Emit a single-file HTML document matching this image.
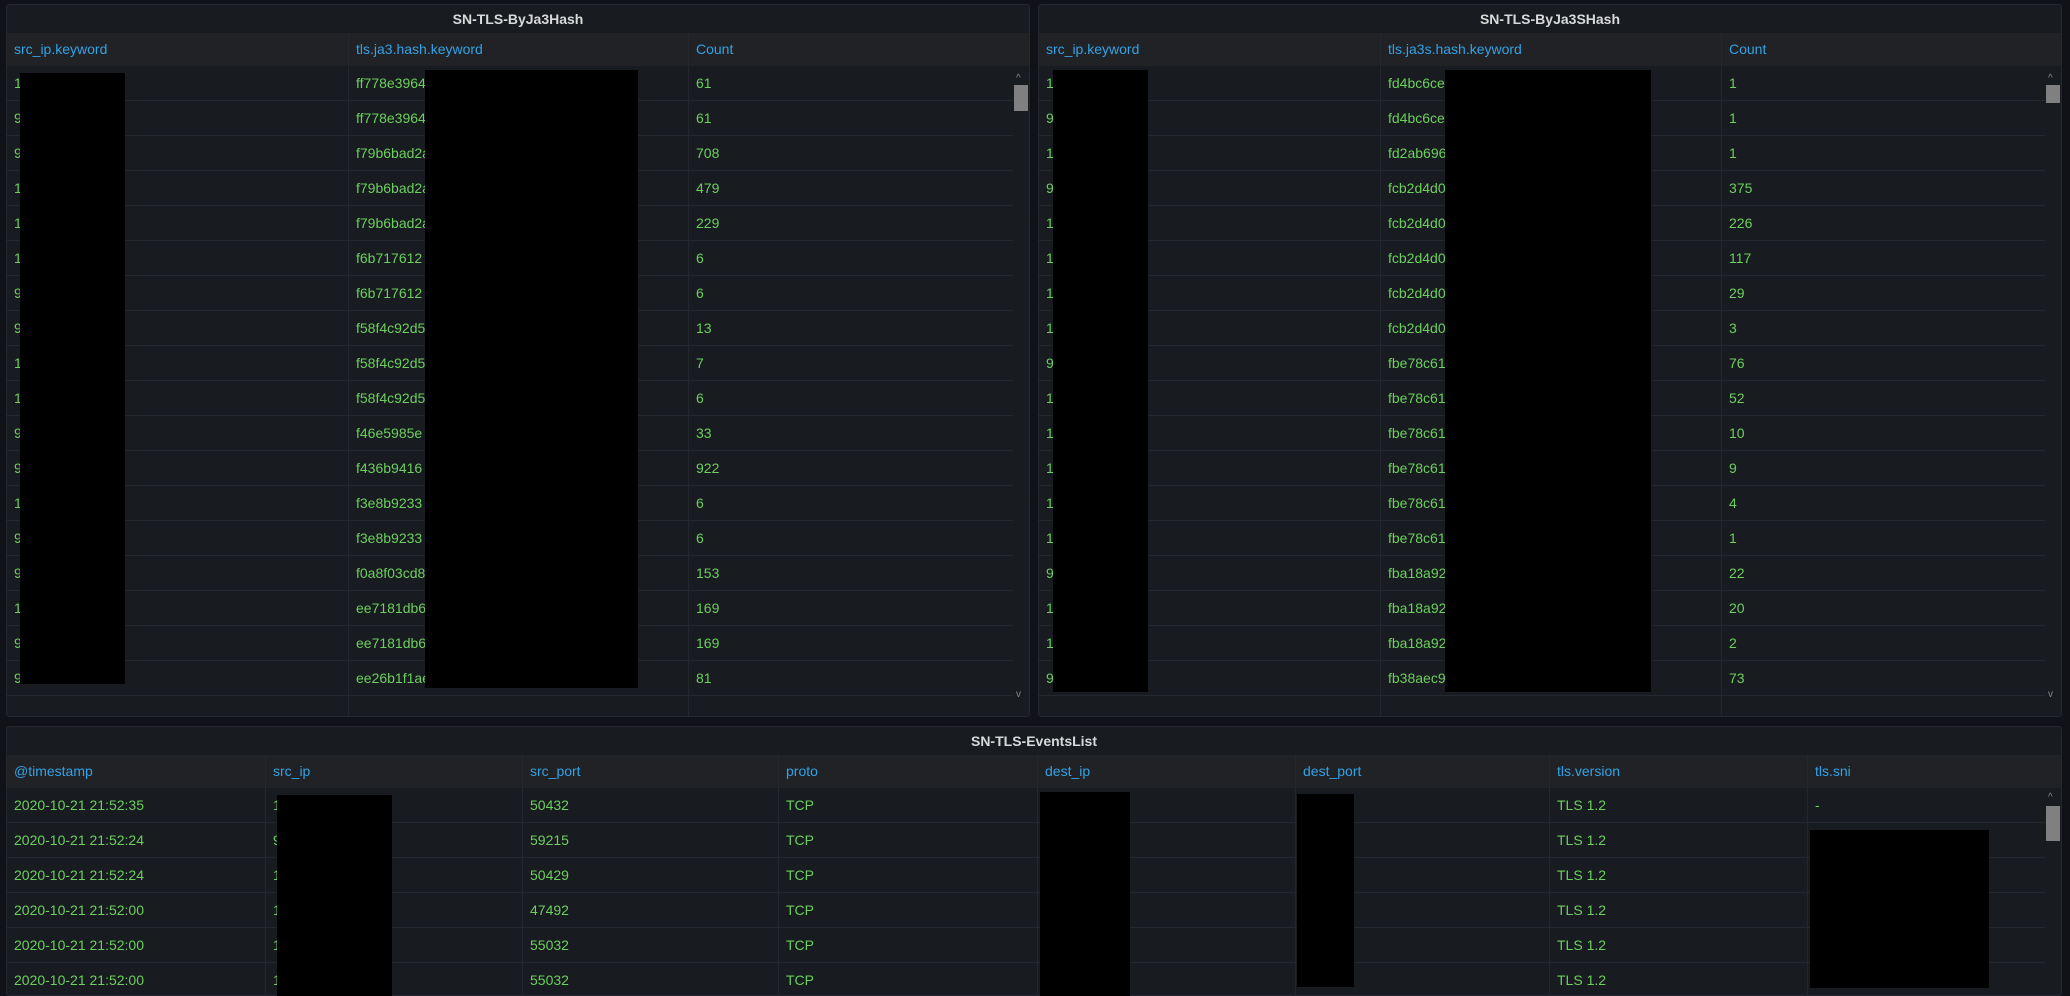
<!DOCTYPE html>
<html><head><meta charset="utf-8"><style>
*{box-sizing:border-box;margin:0;padding:0}
html,body{width:2070px;height:996px;overflow:hidden}
body{background:#111217;font-family:"Liberation Sans",sans-serif;font-size:14px;position:relative}
.p{position:absolute;background:#181b1f;border:1px solid #24272d;border-radius:3px;overflow:hidden}
.t{height:28px;line-height:29px;text-align:center;color:#d8d9da;font-weight:bold;font-size:14px}
.h,.r{display:flex;height:35px;line-height:35px}
.h{height:33px;line-height:33px;background:#202226;color:#33a2e5}
.r{color:#6ccf5e;border-bottom:1px solid #24272d}
.c{padding-left:7px;border-left:1px solid #24272d;white-space:nowrap;overflow:hidden}
.c:first-child{border-left:none}
.b{position:absolute;background:#000}
.sb{position:absolute;width:14px;background:#808080}
.ar{position:absolute;color:#888;font-size:10px}
</style></head><body>

<div class="p" style="left:6px;top:4px;width:1024px;height:713px">
<div class="t">SN-TLS-ByJa3Hash</div>
<div class="h"><div class="c" style="width:341px">src_ip.keyword</div><div class="c" style="width:340px">tls.ja3.hash.keyword</div><div class="c" style="flex:1">Count</div></div>
<div style="width:1006px">
<div class="r"><div class="c" style="width:341px">1</div><div class="c" style="width:340px">ff778e3964</div><div class="c" style="flex:1">61</div></div>
<div class="r"><div class="c" style="width:341px">9</div><div class="c" style="width:340px">ff778e3964</div><div class="c" style="flex:1">61</div></div>
<div class="r"><div class="c" style="width:341px">9</div><div class="c" style="width:340px">f79b6bad2a</div><div class="c" style="flex:1">708</div></div>
<div class="r"><div class="c" style="width:341px">1</div><div class="c" style="width:340px">f79b6bad2a</div><div class="c" style="flex:1">479</div></div>
<div class="r"><div class="c" style="width:341px">1</div><div class="c" style="width:340px">f79b6bad2a</div><div class="c" style="flex:1">229</div></div>
<div class="r"><div class="c" style="width:341px">1</div><div class="c" style="width:340px">f6b717612</div><div class="c" style="flex:1">6</div></div>
<div class="r"><div class="c" style="width:341px">9</div><div class="c" style="width:340px">f6b717612</div><div class="c" style="flex:1">6</div></div>
<div class="r"><div class="c" style="width:341px">9</div><div class="c" style="width:340px">f58f4c92d5</div><div class="c" style="flex:1">13</div></div>
<div class="r"><div class="c" style="width:341px">1</div><div class="c" style="width:340px">f58f4c92d5</div><div class="c" style="flex:1">7</div></div>
<div class="r"><div class="c" style="width:341px">1</div><div class="c" style="width:340px">f58f4c92d5</div><div class="c" style="flex:1">6</div></div>
<div class="r"><div class="c" style="width:341px">9</div><div class="c" style="width:340px">f46e5985e</div><div class="c" style="flex:1">33</div></div>
<div class="r"><div class="c" style="width:341px">9</div><div class="c" style="width:340px">f436b9416</div><div class="c" style="flex:1">922</div></div>
<div class="r"><div class="c" style="width:341px">1</div><div class="c" style="width:340px">f3e8b9233</div><div class="c" style="flex:1">6</div></div>
<div class="r"><div class="c" style="width:341px">9</div><div class="c" style="width:340px">f3e8b9233</div><div class="c" style="flex:1">6</div></div>
<div class="r"><div class="c" style="width:341px">9</div><div class="c" style="width:340px">f0a8f03cd8</div><div class="c" style="flex:1">153</div></div>
<div class="r"><div class="c" style="width:341px">1</div><div class="c" style="width:340px">ee7181db6</div><div class="c" style="flex:1">169</div></div>
<div class="r"><div class="c" style="width:341px">9</div><div class="c" style="width:340px">ee7181db6</div><div class="c" style="flex:1">169</div></div>
<div class="r"><div class="c" style="width:341px">9</div><div class="c" style="width:340px">ee26b1f1ae</div><div class="c" style="flex:1">81</div></div>
<div class="r" style="border:none"><div class="c" style="width:341px"></div><div class="c" style="width:340px"></div><div class="c" style="flex:1"></div></div>
</div>
<div class="ar" style="left:1009px;top:68px">^</div>
<div class="sb" style="left:1007px;top:80px;height:26px"></div>
<div class="ar" style="left:1009px;top:684px">v</div>
</div>

<div class="p" style="left:1038px;top:4px;width:1024px;height:713px">
<div class="t">SN-TLS-ByJa3SHash</div>
<div class="h"><div class="c" style="width:341px">src_ip.keyword</div><div class="c" style="width:341px">tls.ja3s.hash.keyword</div><div class="c" style="flex:1">Count</div></div>
<div style="width:1006px">
<div class="r"><div class="c" style="width:341px">1</div><div class="c" style="width:341px">fd4bc6ce</div><div class="c" style="flex:1">1</div></div>
<div class="r"><div class="c" style="width:341px">9</div><div class="c" style="width:341px">fd4bc6ce</div><div class="c" style="flex:1">1</div></div>
<div class="r"><div class="c" style="width:341px">1</div><div class="c" style="width:341px">fd2ab696</div><div class="c" style="flex:1">1</div></div>
<div class="r"><div class="c" style="width:341px">9</div><div class="c" style="width:341px">fcb2d4d0</div><div class="c" style="flex:1">375</div></div>
<div class="r"><div class="c" style="width:341px">1</div><div class="c" style="width:341px">fcb2d4d0</div><div class="c" style="flex:1">226</div></div>
<div class="r"><div class="c" style="width:341px">1</div><div class="c" style="width:341px">fcb2d4d0</div><div class="c" style="flex:1">117</div></div>
<div class="r"><div class="c" style="width:341px">1</div><div class="c" style="width:341px">fcb2d4d0</div><div class="c" style="flex:1">29</div></div>
<div class="r"><div class="c" style="width:341px">1</div><div class="c" style="width:341px">fcb2d4d0</div><div class="c" style="flex:1">3</div></div>
<div class="r"><div class="c" style="width:341px">9</div><div class="c" style="width:341px">fbe78c61</div><div class="c" style="flex:1">76</div></div>
<div class="r"><div class="c" style="width:341px">1</div><div class="c" style="width:341px">fbe78c61</div><div class="c" style="flex:1">52</div></div>
<div class="r"><div class="c" style="width:341px">1</div><div class="c" style="width:341px">fbe78c61</div><div class="c" style="flex:1">10</div></div>
<div class="r"><div class="c" style="width:341px">1</div><div class="c" style="width:341px">fbe78c61</div><div class="c" style="flex:1">9</div></div>
<div class="r"><div class="c" style="width:341px">1</div><div class="c" style="width:341px">fbe78c61</div><div class="c" style="flex:1">4</div></div>
<div class="r"><div class="c" style="width:341px">1</div><div class="c" style="width:341px">fbe78c61</div><div class="c" style="flex:1">1</div></div>
<div class="r"><div class="c" style="width:341px">9</div><div class="c" style="width:341px">fba18a92</div><div class="c" style="flex:1">22</div></div>
<div class="r"><div class="c" style="width:341px">1</div><div class="c" style="width:341px">fba18a92</div><div class="c" style="flex:1">20</div></div>
<div class="r"><div class="c" style="width:341px">1</div><div class="c" style="width:341px">fba18a92</div><div class="c" style="flex:1">2</div></div>
<div class="r"><div class="c" style="width:341px">9</div><div class="c" style="width:341px">fb38aec9</div><div class="c" style="flex:1">73</div></div>
<div class="r" style="border:none"><div class="c" style="width:341px"></div><div class="c" style="width:341px"></div><div class="c" style="flex:1"></div></div>
</div>
<div class="ar" style="left:1009px;top:68px">^</div>
<div class="sb" style="left:1007px;top:80px;height:18px"></div>
<div class="ar" style="left:1009px;top:684px">v</div>
</div>

<div class="p" style="left:6px;top:726px;width:2056px;height:270px">
<div class="t">SN-TLS-EventsList</div>
<div class="h"><div class="c" style="width:258px">@timestamp</div><div class="c" style="width:257px">src_ip</div><div class="c" style="width:256px">src_port</div><div class="c" style="width:259px">proto</div><div class="c" style="width:258px">dest_ip</div><div class="c" style="width:254px">dest_port</div><div class="c" style="width:258px">tls.version</div><div class="c" style="flex:1">tls.sni</div></div>
<div style="width:2038px">
<div class="r"><div class="c" style="width:258px">2020-10-21 21:52:35</div><div class="c" style="width:257px">1</div><div class="c" style="width:256px">50432</div><div class="c" style="width:259px">TCP</div><div class="c" style="width:258px"></div><div class="c" style="width:254px"></div><div class="c" style="width:258px">TLS 1.2</div><div class="c" style="flex:1">-</div></div>
<div class="r"><div class="c" style="width:258px">2020-10-21 21:52:24</div><div class="c" style="width:257px">9</div><div class="c" style="width:256px">59215</div><div class="c" style="width:259px">TCP</div><div class="c" style="width:258px"></div><div class="c" style="width:254px"></div><div class="c" style="width:258px">TLS 1.2</div><div class="c" style="flex:1"></div></div>
<div class="r"><div class="c" style="width:258px">2020-10-21 21:52:24</div><div class="c" style="width:257px">1</div><div class="c" style="width:256px">50429</div><div class="c" style="width:259px">TCP</div><div class="c" style="width:258px"></div><div class="c" style="width:254px"></div><div class="c" style="width:258px">TLS 1.2</div><div class="c" style="flex:1"></div></div>
<div class="r"><div class="c" style="width:258px">2020-10-21 21:52:00</div><div class="c" style="width:257px">1</div><div class="c" style="width:256px">47492</div><div class="c" style="width:259px">TCP</div><div class="c" style="width:258px"></div><div class="c" style="width:254px"></div><div class="c" style="width:258px">TLS 1.2</div><div class="c" style="flex:1"></div></div>
<div class="r"><div class="c" style="width:258px">2020-10-21 21:52:00</div><div class="c" style="width:257px">1</div><div class="c" style="width:256px">55032</div><div class="c" style="width:259px">TCP</div><div class="c" style="width:258px"></div><div class="c" style="width:254px"></div><div class="c" style="width:258px">TLS 1.2</div><div class="c" style="flex:1"></div></div>
<div class="r"><div class="c" style="width:258px">2020-10-21 21:52:00</div><div class="c" style="width:257px">1</div><div class="c" style="width:256px">55032</div><div class="c" style="width:259px">TCP</div><div class="c" style="width:258px"></div><div class="c" style="width:254px"></div><div class="c" style="width:258px">TLS 1.2</div><div class="c" style="flex:1"></div></div>
</div>
<div class="ar" style="left:2041px;top:65px">^</div>
<div class="sb" style="left:2039px;top:79px;height:35px"></div>
</div>

<div class="b" style="left:20px;top:73px;width:105px;height:611px"></div>
<div class="b" style="left:425px;top:70px;width:213px;height:618px"></div>
<div class="b" style="left:1053px;top:70px;width:95px;height:622px"></div>
<div class="b" style="left:1445px;top:70px;width:206px;height:622px"></div>
<div class="b" style="left:277px;top:795px;width:115px;height:201px"></div>
<div class="b" style="left:1040px;top:792px;width:90px;height:204px"></div>
<div class="b" style="left:1297px;top:794px;width:57px;height:193px"></div>
<div class="b" style="left:1810px;top:830px;width:179px;height:158px"></div>
</body></html>
